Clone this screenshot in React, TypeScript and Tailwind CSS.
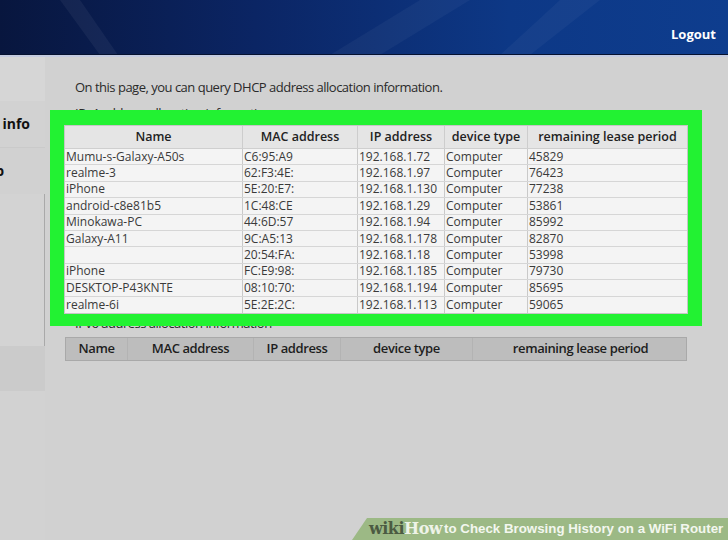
import React from "react";

const rows = [
  ["Mumu-s-Galaxy-A50s", "C6:95:A9", "192.168.1.72", "Computer", "45829"],
  ["realme-3", "62:F3:4E:", "192.168.1.97", "Computer", "76423"],
  ["iPhone", "5E:20:E7:", "192.168.1.130", "Computer", "77238"],
  ["android-c8e81b5", "1C:48:CE", "192.168.1.29", "Computer", "53861"],
  ["Minokawa-PC", "44:6D:57", "192.168.1.94", "Computer", "85992"],
  ["Galaxy-A11", "9C:A5:13", "192.168.1.178", "Computer", "82870"],
  ["", "20:54:FA:", "192.168.1.18", "Computer", "53998"],
  ["iPhone", "FC:E9:98:", "192.168.1.185", "Computer", "79730"],
  ["DESKTOP-P43KNTE", "08:10:70:", "192.168.1.194", "Computer", "85695"],
  ["realme-6i", "5E:2E:2C:", "192.168.1.113", "Computer", "59065"],
];

const heads = ["Name", "MAC address", "IP address", "device type", "remaining lease period"];

export default function App() {
  return (
    <div
      className="relative w-[728px] h-[540px] overflow-hidden bg-[#d1d1d1] flex flex-col"
      style={{ fontFamily: '"Open Sans", "Noto Sans", sans-serif' }}
    >
      {/* Header */}
      <div className="relative h-[57px] shrink-0 bg-[linear-gradient(90deg,#08163e_0%,#0b2564_35%,#0d3886_70%,#0e3d8e_100%)] border-b-[2px] border-[#c4cbe0] flex items-end justify-end pb-[14px] pr-[12px] overflow-hidden">
        <svg className="absolute inset-0" width="728" height="55" viewBox="0 0 728 55">
          <polygon points="60,0 80,0 118,55 100,55" fill="#ffffff" opacity="0.05" />
          <polygon points="330,55 420,0 470,0 380,55" fill="#ffffff" opacity="0.04" />
          <polygon points="500,55 560,0 600,0 530,55" fill="#ffffff" opacity="0.04" />
        </svg>
        <div className="absolute left-0 right-0 bottom-0 h-[1px] bg-[#061230]" />
        <span className="relative text-white font-bold text-[13px] leading-none">Logout</span>
      </div>

      {/* Body */}
      <div className="flex flex-1">
        {/* Sidebar */}
        <div className="w-[45px] shrink-0 flex flex-col bg-[#d3d3d3]">
          <div className="h-[44px] bg-[#d6d6d6]" />
          <div className="h-[47px] bg-[#d2d2d2] border-b border-[#cacaca] flex items-center justify-end pr-[15px] overflow-hidden whitespace-nowrap">
            <span className="font-bold text-[14px] text-[#111] leading-none">Device info</span>
          </div>
          <div className="h-[46px] bg-[#d1d1d1] flex items-center justify-end pr-[41px] overflow-hidden whitespace-nowrap">
            <span className="font-bold text-[14px] text-[#111] leading-none">Setup</span>
          </div>
          <div className="h-[152px] border-r border-[#a9a9a9] bg-[#d3d3d3]" />
          <div className="h-[45px] bg-[#cbcbcb]" />
          <div className="flex-1 bg-[#d2d2d2]" />
        </div>

        {/* Main */}
        <div className="flex-1 pl-[19px] pt-[22px] text-[#222]">
          <div className="ml-[11px] text-[13px] leading-[16px] tracking-[-0.5px] text-[#2a2a2a]">
            On this page, you can query DHCP address allocation information.
          </div>
          <div className="ml-[11px] mt-[10px] text-[13px] leading-[16px] tracking-[-0.5px] text-[#2a2a2a]">
            IPv4 address allocation information
          </div>

          {/* IPv4 table with highlight */}
          <div className="relative mt-[4px] w-[624px]">
            <div className="absolute -top-[15px] -left-[14px] -right-[14px] -bottom-[12px] bg-[#22f232]" />
            <div className="relative border border-[#c6c6c6] bg-[#f4f4f4]">
              <div className="grid grid-cols-[178px_115px_87px_83px_159px] h-[23px] bg-[#e5e5e5] border-b border-[#cfcfcf]">
                {heads.map((h, i) => (
                  <div
                    key={h}
                    className={`flex items-center justify-center text-[12.5px] font-semibold text-[#222] ${i < 4 ? "border-r border-[#cdcdcd]" : ""}`}
                  >
                    {h}
                  </div>
                ))}
              </div>
              {rows.map((r, ri) => (
                <div
                  key={ri}
                  className={`grid grid-cols-[178px_115px_87px_83px_159px] h-[16.4px] ${ri < rows.length - 1 ? "border-b border-[#d6d6d6]" : ""}`}
                >
                  {r.map((c, ci) => (
                    <div
                      key={ci}
                      className={`flex items-center pl-[1px] text-[12px] leading-none text-[#3a3a3a] overflow-hidden whitespace-nowrap ${ci < 4 ? "border-r border-[#c9c9c9]" : ""}`}
                    >
                      {c}
                    </div>
                  ))}
                </div>
              ))}
            </div>
          </div>

          <div className="ml-[11px] mt-[1px] text-[13px] leading-[16px] tracking-[-0.5px] text-[#2a2a2a]">
            IPv6 address allocation information
          </div>

          {/* IPv6 table */}
          <div className="mt-[6px] ml-[1px] w-[622px] h-[24px] grid grid-cols-[62px_126px_87px_132px_215px] bg-[#bdbdbd] border border-[#a9a9a9]">
            {heads.map((h, i) => (
              <div
                key={h}
                className={`flex items-center justify-center text-[13px] font-semibold tracking-[-0.4px] text-[#1e1e1e] ${i < 4 ? "border-r border-[#b3b3b3]" : ""}`}
              >
                {h}
              </div>
            ))}
          </div>
        </div>
      </div>

      {/* wikiHow watermark */}
      <div
        className="absolute right-0 bottom-0 h-[22px] w-[376px] bg-[#9cb985] flex items-center pl-[17px] whitespace-nowrap"
        style={{ clipPath: "polygon(15px 0, 100% 0, 100% 100%, 0 100%)" }}
      >
        <span
          className="font-bold text-[16px] text-[#4b5b42] leading-none tracking-[-0.5px]"
          style={{ fontFamily: '"DejaVu Serif", "Liberation Serif", serif' }}
        >
          wiki
        </span>
        <span
          className="font-bold text-[16px] text-[#eef3e8] leading-none tracking-[-0.5px]"
          style={{ fontFamily: '"DejaVu Serif", "Liberation Serif", serif' }}
        >
          How
        </span>
        <span
          className="ml-[2px] font-bold text-[13.3px] text-[#f3f7ef] leading-none"
          style={{ fontFamily: '"Liberation Sans", Arial, sans-serif' }}
        >
          to Check Browsing History on a WiFi Router
        </span>
      </div>
    </div>
  );
}
